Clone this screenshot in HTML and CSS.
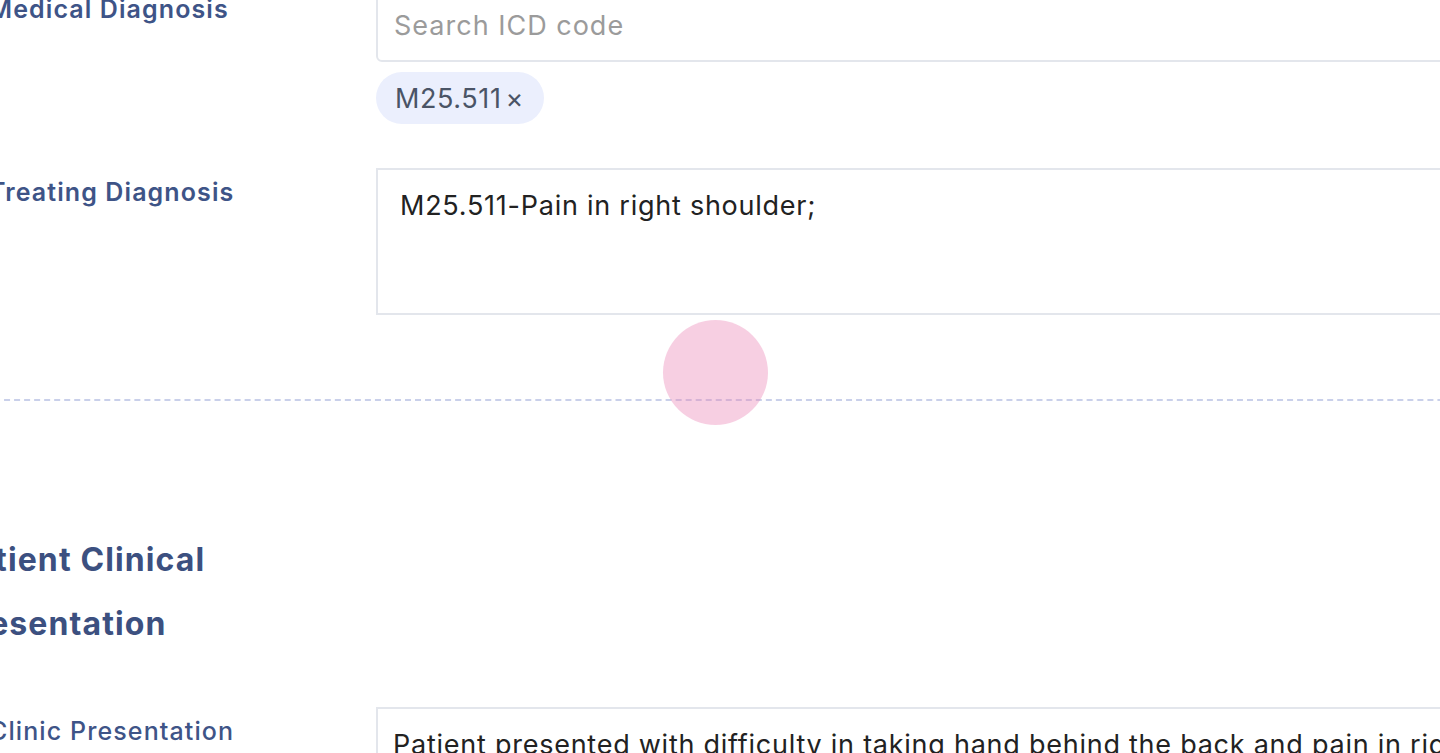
FILE: index.html
```html
<!DOCTYPE html>
<html lang="en">
<head>
<meta charset="utf-8">
<title>Diagnosis</title>
<link rel="stylesheet" href="styles.css">
</head>
<body>
<div class="page">
  <div class="row row-medical">
    <div class="label">Medical Diagnosis</div>
    <div class="field">
      <div class="input"><span class="placeholder">Search ICD code</span></div>
      <div class="chips"><span class="chip">M25.511<span class="chip-x">×</span></span></div>
    </div>
  </div>
  <div class="row row-treating">
    <div class="label">Treating Diagnosis</div>
    <div class="field">
      <div class="textarea textarea-tall">M25.511-Pain in right shoulder;</div>
    </div>
  </div>
  <div class="divider"></div>
  <h2 class="heading">Patient Clinical Presentation</h2>
  <div class="row row-clinic">
    <div class="label">Clinic Presentation</div>
    <div class="field">
      <div class="textarea textarea-clinic">Patient presented with difficulty in taking hand behind the back and pain in right shoulder</div>
    </div>
  </div>
  <div class="touch"></div>
</div>
</body>
</html>
```
FILE: styles.css
```css
html, body {
  margin: 0;
  padding: 0;
  background: #ffffff;
  overflow: hidden;
}
body {
  width: 1440px;
  height: 753px;
  position: relative;
  font-family: "Inter", "Noto Sans", sans-serif;
}
.page {
  margin-top: -19px;
  margin-left: -16px;
  width: 1700px;
}
.row {
  display: grid;
  grid-template-columns: 392px 1fr;
}
.label {
  color: #3e5487;
  font-size: 25px;
  font-weight: 600;
  letter-spacing: 1.1px;
  line-height: 32px;
  padding-top: 12px;
  padding-left: 5px;
  white-space: nowrap;
}
.input {
  height: 81px;
  border: 2px solid #e3e6ec;
  border-radius: 6px;
  box-sizing: border-box;
  display: flex;
  align-items: center;
  padding: 0 16px;
}
.placeholder {
  color: #9b9b9b;
  font-size: 27px;
  letter-spacing: 1px;
  padding-top: 8px;
}
.chips {
  margin-top: 10px;
  display: flex;
}
.chip {
  background: #ebeffd;
  color: #4a5466;
  font-size: 27px;
  letter-spacing: 0.6px;
  height: 52px;
  border-radius: 26px;
  display: inline-flex;
  align-items: center;
  padding: 0 20px 0 19px;
}
.chip-x {
  margin-left: 4px;
  font-size: 27px;
}
.row-treating {
  margin-top: 44px;
}
.row-treating .label {
  padding-top: 8px;
}
.textarea {
  border: 2px solid #e3e6ec;
  box-sizing: border-box;
  color: #222222;
  font-size: 27px;
  letter-spacing: 0.75px;
  line-height: 36px;
  white-space: nowrap;
}
.textarea-tall {
  height: 147px;
  padding: 18px 22px;
}
.divider {
  margin-top: 84px;
  border-top: 2px dashed #c9d0ea;
  height: 0;
}
.heading {
  margin: 127px 0 0 -30px;
  width: 290px;
  color: #3c5080;
  font-size: 32px;
  font-weight: 700;
  letter-spacing: 1.1px;
  line-height: 64px;
}
.row-clinic {
  margin-top: 51px;
}
.row-clinic .label {
  padding-top: 8px;
  font-weight: 500;
}
.textarea-clinic {
  height: 200px;
  padding: 18px 15px;
}
.touch {
  position: absolute;
  left: 663px;
  top: 320px;
  width: 105px;
  height: 105px;
  border-radius: 50%;
  background: rgba(233, 130, 180, 0.38);
}
```
